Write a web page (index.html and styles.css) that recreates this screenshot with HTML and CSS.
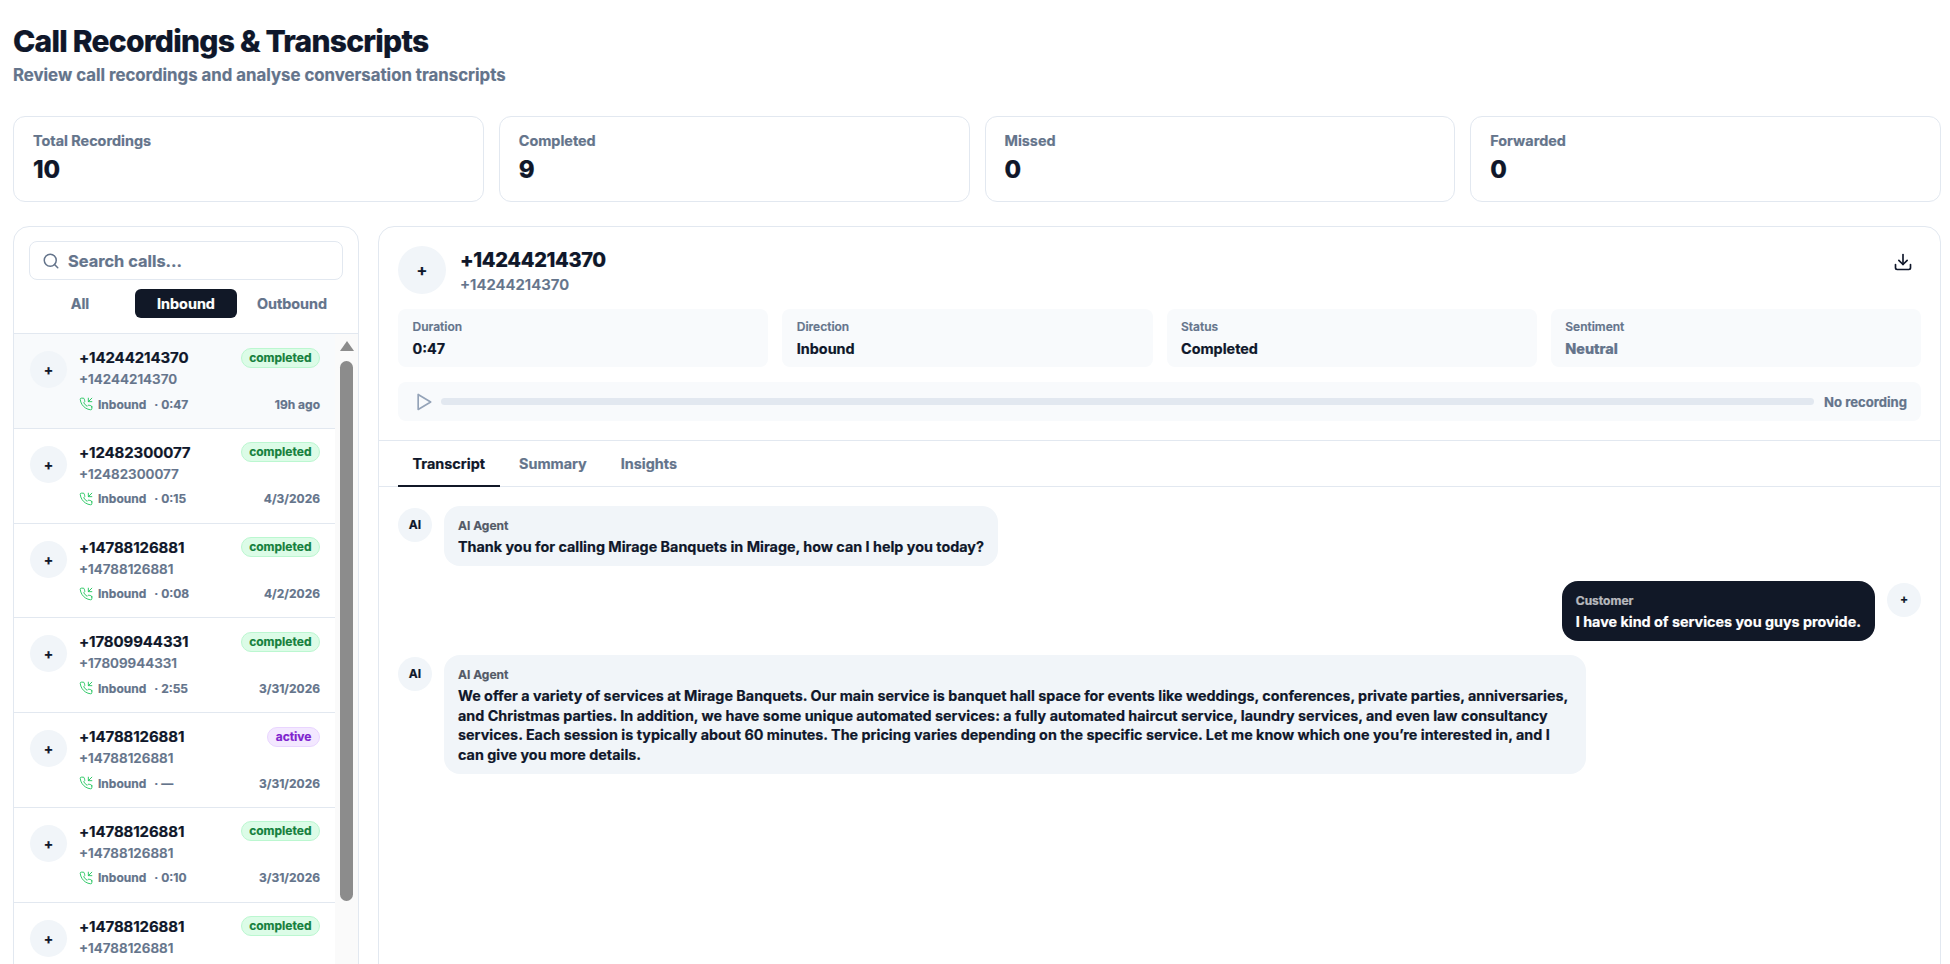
FILE: index.html
```html
<!DOCTYPE html>
<html lang="en">
<head>
    <meta charset="UTF-8">
    <meta name="viewport" content="width=device-width, initial-scale=1.0">
    <title>Call Recordings &amp; Transcripts</title>
    <link rel="stylesheet" href="styles.css">
</head>

<body>
<div class="page">
    <header class="head">
        <h1>Call Recordings &amp; Transcripts</h1>
        <p>Review call recordings and analyse conversation transcripts</p>
    </header>

    <section class="stats">
        <div class="stat"><span class="stat-label">Total Recordings</span><strong>10</strong></div>
        <div class="stat"><span class="stat-label">Completed</span><strong>9</strong></div>
        <div class="stat"><span class="stat-label">Missed</span><strong>0</strong></div>
        <div class="stat"><span class="stat-label">Forwarded</span><strong>0</strong></div>
    </section>

    <section class="main">
        <aside class="side">
            <div class="side-top">
                <div class="search">
                    <svg width="18" height="18" viewBox="0 0 24 24" fill="none" stroke="#64748b" stroke-width="2" stroke-linecap="round"><circle cx="11" cy="11" r="8"/><path d="m21 21-4.3-4.3"/></svg>
                    <span>Search calls...</span>
                </div>
                <div class="filters">
                    <span>All</span>
                    <span class="on">Inbound</span>
                    <span>Outbound</span>
                </div>
            </div>
            <div class="list-wrap">
                <ul class="calls">
                    <li class="sel">
                        <span class="av">+</span>
                        <div class="info">
                            <div class="r1"><b>+14244214370</b><em class="badge ok">completed</em></div>
                            <div class="r2">+14244214370</div>
                            <div class="r3"><svg class="ph" viewBox="0 0 24 24"><path d="M16 2v6h6M22 2l-6 6M22 16.92v3a2 2 0 0 1-2.18 2 19.79 19.79 0 0 1-8.63-3.07 19.5 19.5 0 0 1-6-6 19.79 19.79 0 0 1-3.07-8.67A2 2 0 0 1 4.11 2h3a2 2 0 0 1 2 1.72c.13.96.36 1.9.7 2.81a2 2 0 0 1-.45 2.11L8.09 9.91a16 16 0 0 0 6 6l1.27-1.27a2 2 0 0 1 2.11-.45c.91.34 1.85.57 2.81.7A2 2 0 0 1 22 16.92z"/></svg><span>Inbound</span><span class="dur">· 0:47</span><time>19h ago</time></div>
                        </div>
                    </li>
                    <li>
                        <span class="av">+</span>
                        <div class="info">
                            <div class="r1"><b>+12482300077</b><em class="badge ok">completed</em></div>
                            <div class="r2">+12482300077</div>
                            <div class="r3"><svg class="ph" viewBox="0 0 24 24"><path d="M16 2v6h6M22 2l-6 6M22 16.92v3a2 2 0 0 1-2.18 2 19.79 19.79 0 0 1-8.63-3.07 19.5 19.5 0 0 1-6-6 19.79 19.79 0 0 1-3.07-8.67A2 2 0 0 1 4.11 2h3a2 2 0 0 1 2 1.72c.13.96.36 1.9.7 2.81a2 2 0 0 1-.45 2.11L8.09 9.91a16 16 0 0 0 6 6l1.27-1.27a2 2 0 0 1 2.11-.45c.91.34 1.85.57 2.81.7A2 2 0 0 1 22 16.92z"/></svg><span>Inbound</span><span class="dur">· 0:15</span><time>4/3/2026</time></div>
                        </div>
                    </li>
                    <li>
                        <span class="av">+</span>
                        <div class="info">
                            <div class="r1"><b>+14788126881</b><em class="badge ok">completed</em></div>
                            <div class="r2">+14788126881</div>
                            <div class="r3"><svg class="ph" viewBox="0 0 24 24"><path d="M16 2v6h6M22 2l-6 6M22 16.92v3a2 2 0 0 1-2.18 2 19.79 19.79 0 0 1-8.63-3.07 19.5 19.5 0 0 1-6-6 19.79 19.79 0 0 1-3.07-8.67A2 2 0 0 1 4.11 2h3a2 2 0 0 1 2 1.72c.13.96.36 1.9.7 2.81a2 2 0 0 1-.45 2.11L8.09 9.91a16 16 0 0 0 6 6l1.27-1.27a2 2 0 0 1 2.11-.45c.91.34 1.85.57 2.81.7A2 2 0 0 1 22 16.92z"/></svg><span>Inbound</span><span class="dur">· 0:08</span><time>4/2/2026</time></div>
                        </div>
                    </li>
                    <li>
                        <span class="av">+</span>
                        <div class="info">
                            <div class="r1"><b>+17809944331</b><em class="badge ok">completed</em></div>
                            <div class="r2">+17809944331</div>
                            <div class="r3"><svg class="ph" viewBox="0 0 24 24"><path d="M16 2v6h6M22 2l-6 6M22 16.92v3a2 2 0 0 1-2.18 2 19.79 19.79 0 0 1-8.63-3.07 19.5 19.5 0 0 1-6-6 19.79 19.79 0 0 1-3.07-8.67A2 2 0 0 1 4.11 2h3a2 2 0 0 1 2 1.72c.13.96.36 1.9.7 2.81a2 2 0 0 1-.45 2.11L8.09 9.91a16 16 0 0 0 6 6l1.27-1.27a2 2 0 0 1 2.11-.45c.91.34 1.85.57 2.81.7A2 2 0 0 1 22 16.92z"/></svg><span>Inbound</span><span class="dur">· 2:55</span><time>3/31/2026</time></div>
                        </div>
                    </li>
                    <li>
                        <span class="av">+</span>
                        <div class="info">
                            <div class="r1"><b>+14788126881</b><em class="badge act">active</em></div>
                            <div class="r2">+14788126881</div>
                            <div class="r3"><svg class="ph" viewBox="0 0 24 24"><path d="M16 2v6h6M22 2l-6 6M22 16.92v3a2 2 0 0 1-2.18 2 19.79 19.79 0 0 1-8.63-3.07 19.5 19.5 0 0 1-6-6 19.79 19.79 0 0 1-3.07-8.67A2 2 0 0 1 4.11 2h3a2 2 0 0 1 2 1.72c.13.96.36 1.9.7 2.81a2 2 0 0 1-.45 2.11L8.09 9.91a16 16 0 0 0 6 6l1.27-1.27a2 2 0 0 1 2.11-.45c.91.34 1.85.57 2.81.7A2 2 0 0 1 22 16.92z"/></svg><span>Inbound</span><span class="dur">· —</span><time>3/31/2026</time></div>
                        </div>
                    </li>
                    <li>
                        <span class="av">+</span>
                        <div class="info">
                            <div class="r1"><b>+14788126881</b><em class="badge ok">completed</em></div>
                            <div class="r2">+14788126881</div>
                            <div class="r3"><svg class="ph" viewBox="0 0 24 24"><path d="M16 2v6h6M22 2l-6 6M22 16.92v3a2 2 0 0 1-2.18 2 19.79 19.79 0 0 1-8.63-3.07 19.5 19.5 0 0 1-6-6 19.79 19.79 0 0 1-3.07-8.67A2 2 0 0 1 4.11 2h3a2 2 0 0 1 2 1.72c.13.96.36 1.9.7 2.81a2 2 0 0 1-.45 2.11L8.09 9.91a16 16 0 0 0 6 6l1.27-1.27a2 2 0 0 1 2.11-.45c.91.34 1.85.57 2.81.7A2 2 0 0 1 22 16.92z"/></svg><span>Inbound</span><span class="dur">· 0:10</span><time>3/31/2026</time></div>
                        </div>
                    </li>
                    <li>
                        <span class="av">+</span>
                        <div class="info">
                            <div class="r1"><b>+14788126881</b><em class="badge ok">completed</em></div>
                            <div class="r2">+14788126881</div>
                        </div>
                    </li>
                </ul>
                <div class="bar">
                    <i class="bar-up"></i>
                    <i class="bar-thumb"></i>
                </div>
            </div>
        </aside>

        <div class="detail">
            <div class="detail-top">
                <div class="caller">
                    <span class="av big">+</span>
                    <div class="caller-name">
                        <h2>+14244214370</h2>
                        <span>+14244214370</span>
                    </div>
                    <svg class="dl" width="20" height="20" viewBox="0 0 24 24" fill="none" stroke="#0f172a" stroke-width="2" stroke-linecap="round" stroke-linejoin="round"><path d="M12 15V3"/><path d="m7 10 5 5 5-5"/><path d="M21 15v4a2 2 0 0 1-2 2H5a2 2 0 0 1-2-2v-4"/></svg>
                </div>
                <div class="facts">
                    <div class="fact"><span>Duration</span><b>0:47</b></div>
                    <div class="fact"><span>Direction</span><b>Inbound</b></div>
                    <div class="fact"><span>Status</span><b>Completed</b></div>
                    <div class="fact"><span>Sentiment</span><b class="muted">Neutral</b></div>
                </div>
                <div class="player">
                    <svg width="20" height="20" viewBox="0 0 24 24" fill="none" stroke="#94a3b8" stroke-width="2" stroke-linejoin="round"><path d="M5 3v18l15-9z"/></svg>
                    <div class="track"></div>
                    <span>No recording</span>
                </div>
            </div>

            <nav class="tabs">
                <span class="on">Transcript</span>
                <span>Summary</span>
                <span>Insights</span>
            </nav>

            <div class="chat">
                <div class="msg">
                    <span class="av sm">AI</span>
                    <div class="bubble">
                        <h4>AI Agent</h4>
                        <p>Thank you for calling Mirage Banquets in Mirage, how can I help you today?</p>
                    </div>
                </div>
                <div class="msg me">
                    <div class="bubble">
                        <h4>Customer</h4>
                        <p>I have kind of services you guys provide.</p>
                    </div>
                    <span class="av sm">+</span>
                </div>
                <div class="msg">
                    <span class="av sm">AI</span>
                    <div class="bubble">
                        <h4>AI Agent</h4>
                        <p>We offer a variety of services at Mirage Banquets. Our main service is banquet hall space for events like weddings, conferences, private parties, anniversaries, and Christmas parties. In addition, we have some unique automated services: a fully automated haircut service, laundry services, and even law consultancy services. Each session is typically about 60 minutes. The pricing varies depending on the specific service. Let me know which one you’re interested in, and I can give you more details.</p>
                    </div>
                </div>
            </div>
        </div>
    </section>
</div>
</body>
</html>
```

FILE: styles.css
```css
* {
    box-sizing: border-box;
}

body {
    margin: 0;
    background: #fff;
    color: #0f172a;
    font-family: Inter, "Liberation Sans", sans-serif;
    font-weight: 600;
    -webkit-text-stroke: 0.2px;
}

h1, h2, h4, p, ul {
    margin: 0;
    padding: 0;
}

ul {
    list-style: none;
}

.page {
    height: 964px;
    padding: 23px 9px 0 13px;
    overflow: hidden;
}

.head h1 {
    font-size: 30px;
    line-height: 36px;
    font-weight: 800;
    letter-spacing: -0.75px;
}

.head p {
    margin-top: 4px;
    font-size: 16.8px;
    line-height: 24px;
    font-weight: 700;
    color: #64748b;
}

.stats {
    display: grid;
    grid-template-columns: repeat(4, 1fr);
    gap: 15px;
    margin-top: 29px;
}

.stat {
    height: 86px;
    padding: 14px 19px;
    border: 1px solid #e2e8f0;
    border-radius: 12px;
}

.stat-label {
    display: block;
    font-size: 14.4px;
    line-height: 20px;
    font-weight: 700;
    color: #64748b;
}

.stat strong {
    display: block;
    margin-top: 3px;
    font-size: 24px;
    line-height: 32px;
    font-weight: 800;
}

.main {
    display: flex;
    gap: 19px;
    margin-top: 24px;
    height: 760px;
}

.side {
    width: 346px;
    flex: none;
    border: 1px solid #e2e8f0;
    border-radius: 16px;
    display: flex;
    flex-direction: column;
    overflow: hidden;
}

.side-top {
    padding: 14px 15px 0;
    height: 107px;
    border-bottom: 1px solid #e2e8f0;
}

.search {
    display: flex;
    align-items: center;
    gap: 8px;
    height: 39px;
    padding: 0 12px;
    border: 1px solid #e2e8f0;
    border-radius: 8px;
    font-size: 16.4px;
    font-weight: 700;
    color: #64748b;
}

.filters {
    display: grid;
    grid-template-columns: repeat(3, 1fr);
    gap: 4px;
    margin-top: 9px;
    font-size: 14.4px;
    font-weight: 700;
    text-align: center;
    color: #64748b;
}

.filters span {
    height: 29px;
    line-height: 29px;
    border-radius: 6px;
}

.filters .on {
    background: #111827;
    color: #fff;
}

.list-wrap {
    flex: 1;
    display: flex;
    min-height: 0;
    overflow: hidden;
}

.calls {
    flex: 1;
}

.calls li {
    display: flex;
    align-items: flex-start;
    gap: 12px;
    height: 94.8px;
    padding: 17px 15px 0 16px;
    border-bottom: 1px solid #e2e8f0;
}

.calls li.sel {
    background: #f8fafc;
}

.av {
    flex: none;
    display: flex;
    align-items: center;
    justify-content: center;
    width: 37px;
    height: 37px;
    border-radius: 50%;
    background: #f1f5f9;
    font-size: 14px;
    font-weight: 700;
}

.info {
    flex: 1;
    min-width: 0;
    margin-top: -5px;
}

.r1 {
    display: flex;
    align-items: center;
    justify-content: space-between;
    height: 23px;
}

.r1 b {
    font-size: 15px;
    font-weight: 700;
    letter-spacing: -0.1px;
}

.badge {
    height: 20px;
    padding: 0 7.5px;
    border-radius: 10px;
    font-size: 12px;
    line-height: 18px;
    font-style: normal;
    font-weight: 700;
    border: 1px solid;
}

.ok {
    background: #dcfce7;
    border-color: #bbf7d0;
    color: #15803d;
}

.act {
    background: #f3e8ff;
    border-color: #e9d5ff;
    color: #7e22ce;
}

.r2 {
    font-size: 13.5px;
    line-height: 20px;
    color: #64748b;
}

.r3 {
    display: flex;
    align-items: center;
    margin-top: 6px;
    height: 18px;
    font-size: 12px;
    font-weight: 700;
    color: #64748b;
}

.ph {
    width: 14px;
    height: 14px;
    margin-right: 5px;
    fill: none;
    stroke: #22c55e;
    stroke-width: 1.6;
    stroke-linecap: round;
    stroke-linejoin: round;
}

.dur {
    margin-left: 8px;
}

.r3 time {
    margin-left: auto;
}

.bar {
    flex: none;
    width: 23px;
    background: #fafafa;
    display: flex;
    flex-direction: column;
    align-items: center;
    padding-top: 7px;
}

.bar-up {
    width: 0;
    height: 0;
    border-left: 7px solid transparent;
    border-right: 7px solid transparent;
    border-bottom: 10px solid #8c8c8c;
}

.bar-thumb {
    width: 13px;
    height: 540px;
    margin-top: 10px;
    border-radius: 7px;
    background: #8c8c8c;
}

.detail {
    flex: 1;
    min-width: 0;
    border: 1px solid #e2e8f0;
    border-radius: 16px;
    display: flex;
    flex-direction: column;
}

.detail-top {
    padding: 19px 19px 19px;
    border-bottom: 1px solid #e2e8f0;
}

.caller {
    display: flex;
    gap: 14px;
}

.av.big {
    width: 48px;
    height: 48px;
    font-size: 16px;
}

.caller-name h2 {
    font-size: 20px;
    line-height: 28px;
    font-weight: 800;
    letter-spacing: -0.35px;
}

.caller-name span {
    display: block;
    margin-top: 1px;
    font-size: 15px;
    line-height: 20px;
    color: #64748b;
}

.dl {
    margin-left: auto;
    margin-top: 6px;
    margin-right: 8px;
}

.facts {
    display: grid;
    grid-template-columns: repeat(4, 1fr);
    gap: 14px;
    margin-top: 14px;
}

.fact {
    height: 58px;
    padding: 9px 14.5px;
    background: #f8fafc;
    border-radius: 8px;
}

.fact span {
    display: block;
    font-size: 12px;
    line-height: 18px;
    color: #64748b;
}

.fact b {
    display: block;
    margin-top: 2px;
    font-size: 14.4px;
    line-height: 22px;
    font-weight: 700;
}

.fact b.muted {
    color: #64748b;
    font-weight: 800;
}

.player {
    display: flex;
    align-items: center;
    gap: 7px;
    height: 39px;
    margin-top: 15px;
    padding: 0 14px 0 16px;
    background: #f8fafc;
    border-radius: 8px;
    font-size: 13.1px;
    font-weight: 700;
    color: #64748b;
}

.track {
    flex: 1;
    height: 7px;
    margin-right: 3px;
    border-radius: 4px;
    background: #e2e8f0;
}

.tabs {
    display: flex;
    height: 46px;
    padding: 0 19px;
    border-bottom: 1px solid #e2e8f0;
    font-size: 14.4px;
    font-weight: 700;
    color: #64748b;
}

.tabs span {
    padding: 0 14.5px;
    line-height: 46px;
    height: 46px;
    margin-right: 5px;
}

.tabs .on {
    color: #0f172a;
    border-bottom: 2px solid #111827;
}

.chat {
    padding: 19px 19px 0;
    display: flex;
    flex-direction: column;
    gap: 14.5px;
}

.msg {
    display: flex;
    gap: 12px;
    align-items: flex-start;
}

.msg.me {
    justify-content: flex-end;
}

.av.sm {
    width: 34px;
    height: 34px;
    font-size: 12px;
    margin-top: 2px;
    padding-bottom: 2px;
}

.bubble {
    max-width: 1142px;
    padding: 11px 14px 9.5px;
    background: #f1f5f9;
    border-radius: 16px;
    font-size: 14.35px;
    font-weight: 700;
    line-height: 19.5px;
}

.bubble h4 {
    margin-bottom: 2px;
    font-size: 12px;
    line-height: 18px;
    font-weight: 700;
    opacity: 0.7;
}

.me .bubble {
    background: #111827;
    color: #fff;
}
```
